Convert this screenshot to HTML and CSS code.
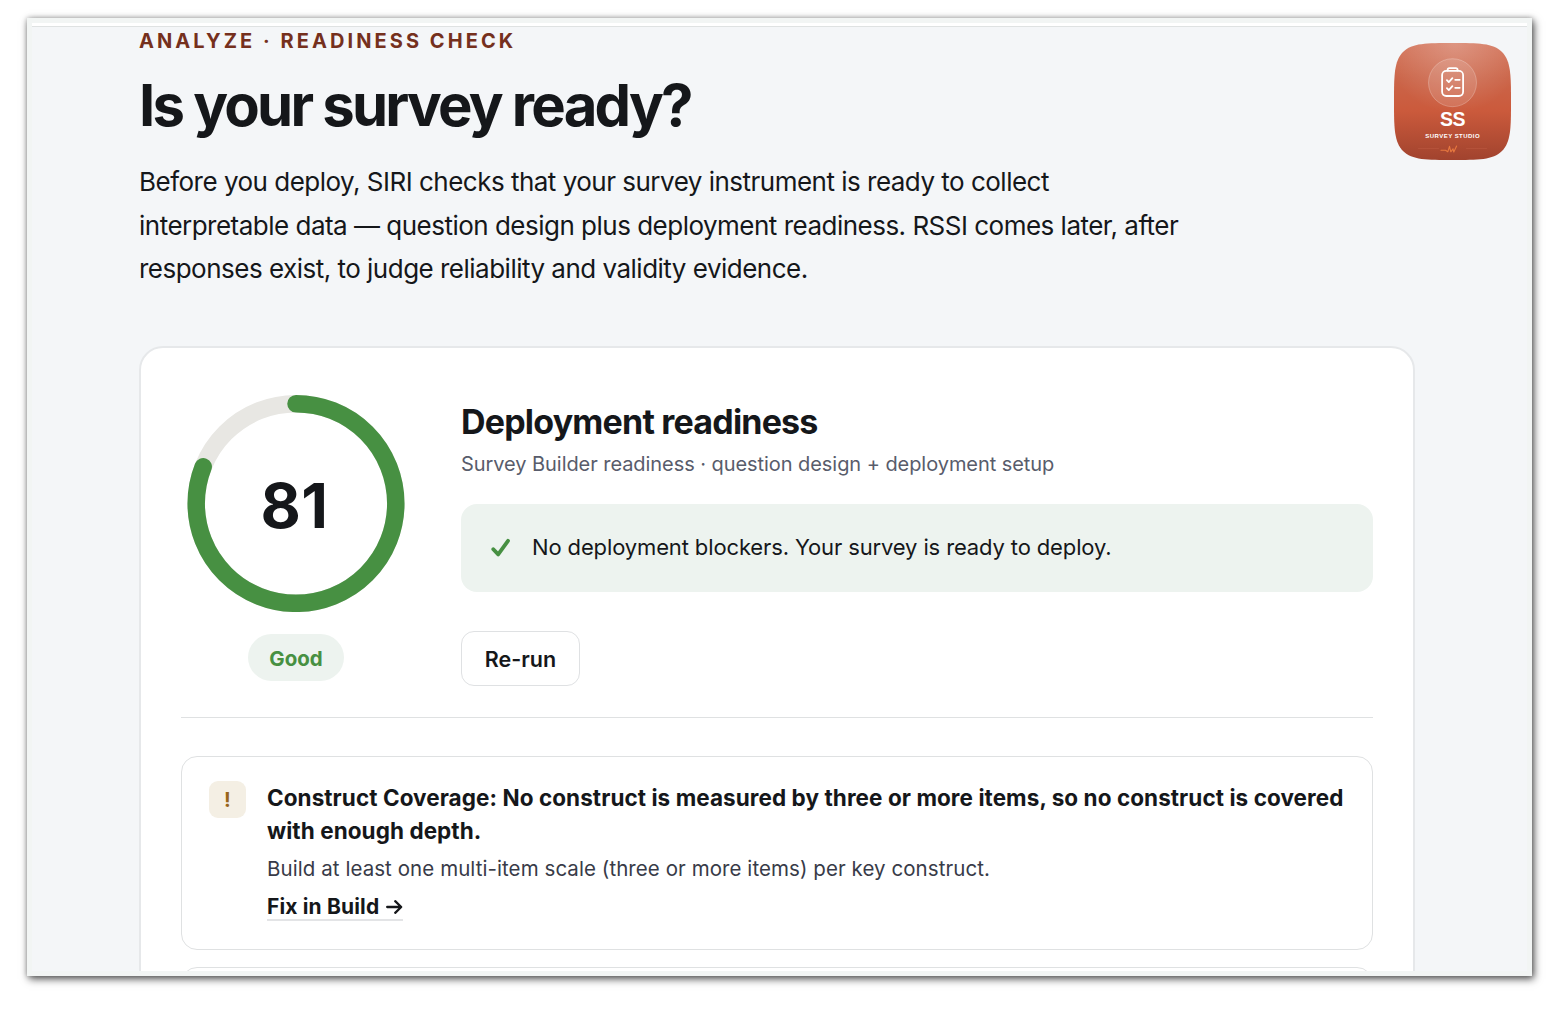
FILE: index.html
```html
<!DOCTYPE html>
<html lang="en">
<head>
<meta charset="utf-8">
<title>Survey Studio – Readiness check</title>
<link rel="stylesheet" href="styles.css">
</head>
<body>
<div class="window">
  <div class="topbar"></div>
  <main class="view">
    <header class="hero">
      <p class="eyebrow">ANALYZE · READINESS CHECK</p>
      <h1 class="title">Is your survey ready?</h1>
      <p class="lead">Before you deploy, SIRI checks that your survey instrument is ready to collect<br>interpretable data — question design plus deployment readiness. RSSI comes later, after<br>responses exist, to judge reliability and validity evidence.</p>
    </header>
    <section class="card">
      <div class="summary">
        <div class="score">
          <div class="gauge">
            <svg class="ring" viewBox="0 0 218 218" width="218" height="218">
              <circle cx="109" cy="109.500" r="99.800" fill="none" stroke="#e8e7e3" stroke-width="17.500"/>
              <circle cx="109" cy="109.500" r="99.800" fill="none" stroke="#479042" stroke-width="17.500" stroke-linecap="round" pathLength="100" stroke-dasharray="81 100" transform="rotate(-90 109 109.500)"/>
            </svg>
            <span class="value">81</span>
          </div>
          <span class="badge">Good</span>
        </div>
        <div class="details">
          <h2 class="heading">Deployment readiness</h2>
          <p class="sub">Survey Builder readiness · question design + deployment setup</p>
          <div class="notice">
            <svg class="check" viewBox="0 0 20 20" width="20" height="20"><path d="M2.300 11.200 7.200 16.400 17 2.800" fill="none" stroke="#479042" stroke-width="3.800" stroke-linecap="round" stroke-linejoin="round"/></svg>
            <span class="notice-text">No deployment blockers. Your survey is ready to deploy.</span>
          </div>
          <button class="rerun">Re-run</button>
        </div>
      </div>
      <div class="issues">
        <article class="issue">
          <span class="mark">!</span>
          <div class="body">
            <h3 class="issue-title">Construct Coverage: No construct is measured by three or more items, so no construct is covered<br>with enough depth.</h3>
            <p class="hint">Build at least one multi-item scale (three or more items) per key construct.</p>
            <a class="fix">Fix in Build <svg class="arrow" viewBox="0 0 17 16" width="17" height="16"><path d="M1.200 8H15M9.200 2.200 15.200 8l-6 5.800" fill="none" stroke="#15171a" stroke-width="2.300" stroke-linecap="round" stroke-linejoin="round"/></svg></a>
          </div>
        </article>
        <article class="issue"></article>
      </div>
    </section>
    <svg class="logo" viewBox="0 0 117 117" width="117" height="117">
      <defs>
        <linearGradient id="base" x1="0" y1="0" x2="0" y2="1">
          <stop offset="0" stop-color="#d3745a"/><stop offset=".3" stop-color="#cb6549"/><stop offset=".58" stop-color="#cb5a3c"/><stop offset="1" stop-color="#a1432e"/>
        </linearGradient>
        <radialGradient id="shine" cx=".52" cy="0" r=".6">
          <stop offset="0" stop-color="#fff" stop-opacity=".24"/><stop offset="1" stop-color="#fff" stop-opacity="0"/>
        </radialGradient>
        <path id="tile" d="M58.500 0C84 0 99 0 108 9C117 18 117 33 117 58.500S117 99 108 108C99 117 84 117 58.500 117S18 117 9 108C0 99 0 84 0 58.500S0 18 9 9C18 0 33 0 58.500 0Z"/>
      </defs>
      <use href="#tile" fill="url(#base)"/>
      <use href="#tile" fill="url(#shine)"/>
      <circle cx="58.500" cy="39.700" r="24" fill="#fff" fill-opacity=".13" stroke="#fff" stroke-opacity=".3" stroke-width=".8"/>
      <g fill="none" stroke="#fff" stroke-width="1.800" stroke-linecap="round" stroke-linejoin="round">
        <rect x="48.100" y="27.800" width="21" height="25.200" rx="4.200"/>
        <path d="M53.600 27.600v-.7q0-1.800 1.800-1.800h6.400q1.800 0 1.800 1.800v.7M52.900 37.200l1.900 1.900 3.600-3.900M61.200 36.800h4.500M52.900 45.200l1.900 1.900 3.600-3.900M61.200 44.800h4.500"/>
      </g>
      <text x="58.500" y="82.500" class="logo-mark">SS</text>
      <text x="58.700" y="95.100" class="logo-name">SURVEY STUDIO</text>
      <path d="M24 105.500h21M72 105.500h21" stroke="#c56046" stroke-opacity=".55" stroke-width=".7"/>
      <path d="M47 107.300h4.500l2.300 1.500 1.700-5.500 1.300 5.500 2.200-3 .8 3.200 2.800-6" fill="none" stroke="#e7783f" stroke-width="1.100" stroke-linecap="round" stroke-linejoin="round"/>
    </svg>
  </main>
</div>
</body>
</html>
```
FILE: styles.css
```css
* { box-sizing: border-box; margin: 0; padding: 0; }
body {
  width: 1568px; height: 1012px; overflow: hidden;
  padding: 18px 36px 36px 27px;
  background: #fff; color: #15171a;
  font-family: Inter, "Liberation Sans", sans-serif;
}
.window {
  height: 958px; padding: 5px;
  background: #f2f5f4;
  box-shadow: 2px 3px 8px rgba(0,0,0,.65), 0 0 5px rgba(0,0,0,.25);
}
.topbar { height: 4px; background: #fff; border-bottom: 1px solid #dfe2e2; }
.view {
  position: relative; height: 944px; overflow: hidden;
  padding: 0 112.500px 0 107px;
  background: #f4f6f8;
}
.hero { height: 319px; white-space: nowrap; }
.eyebrow { padding-top: 1px; font-size: 20px; line-height: 26px; font-weight: 700; letter-spacing: 3.070px; color: #75301d; }
.title { margin-top: 16px; font-size: 58px; line-height: 70px; font-weight: 700; letter-spacing: -2.770px; }
.lead { margin-top: 20px; font-size: 26px; line-height: 43.500px; letter-spacing: -.51px; }
.card {
  height: 700px; padding: 0 40px;
  border: 2px solid #e6e8ea; border-radius: 24px;
  background: #fff;
}
.summary { display: flex; height: 370px; padding-top: 46px; border-bottom: 1px solid #dfe1e2; }
.score { display: flex; flex-direction: column; align-items: center; width: 230px; }
.gauge { display: grid; place-items: center; width: 218px; height: 218px; }
.gauge > * { grid-area: 1 / 1; }
.value { padding: 5px 3px 0 0; font-size: 62px; line-height: 70px; font-weight: 700; letter-spacing: .4px; }
.badge {
  display: grid; place-items: center; width: 96px; height: 47px; margin-top: 22px; padding-top: 1px;
  border-radius: 24px; background: #edf3ef; color: #479042;
  font-size: 20.500px; font-weight: 700;
}
.details { flex: 1; padding-left: 50px; white-space: nowrap; }
.heading { margin-top: 7px; font-size: 34px; line-height: 42px; font-weight: 700; letter-spacing: -.8px; }
.sub { margin-top: 6px; font-size: 20px; line-height: 30px; letter-spacing: -.06px; color: #585c6b; }
.notice { display: flex; align-items: center; height: 88px; margin-top: 25px; padding-left: 30px; border-radius: 16px; background: #edf3ef; }
.notice-text { margin: -2px 0 0 21px; font-size: 22px; letter-spacing: -.13px; }
.rerun {
  display: block; width: 119px; height: 55px; margin-top: 39px;
  border: 1px solid #dfe1e3; border-radius: 13px; background: #fff; color: inherit;
  font-family: inherit; font-size: 21.500px; font-weight: 600;
}
.issues { display: grid; gap: 17px; padding-top: 38px; }
.issue { display: flex; height: 194px; padding: 24px 27px; border: 1px solid #dfe1e2; border-radius: 16px; white-space: nowrap; }
.mark { display: grid; place-items: center; width: 37px; height: 37px; border-radius: 9px; background: #f4efe4; color: #98651a; font-size: 20px; font-weight: 700; }
.body { margin-left: 21px; }
.issue-title { padding-top: 1px; font-size: 22.500px; line-height: 32.500px; font-weight: 700; letter-spacing: .065px; }
.hint { margin-top: 7px; font-size: 20.500px; line-height: 30px; letter-spacing: .07px; color: #383b48; }
.fix { display: inline-flex; align-items: center; margin-top: 9px; height: 28px; gap: 7px; padding-top: 1px; border-bottom: 2px solid #e3e4e6; font-size: 21px; font-weight: 700; letter-spacing: .15px; }
.logo { position: absolute; left: 1362px; top: 16px; }
.logo-mark { font: 700 19.500px "Liberation Sans", sans-serif; fill: #fff; text-anchor: middle; letter-spacing: -.5px; }
.logo-name { font: 700 6px "Liberation Sans", sans-serif; fill: #fff; text-anchor: middle; letter-spacing: .45px; }
```
